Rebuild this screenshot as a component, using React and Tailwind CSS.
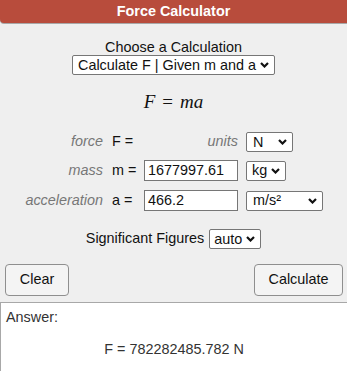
const Chevron = () => (
    <svg width="9" height="6" viewBox="0 0 9 6" className="shrink-0">
        <path d="M1 1 L4.5 4.5 L8 1" fill="none" stroke="#111" strokeWidth="2.2"/>
    </svg>
);

function Select({value, className}) {
    return (
        <div className={"h-[20px] bg-white border border-[#767676] rounded-[2px] flex items-center justify-between whitespace-nowrap pr-[5px] text-[#111] " + className}>
            <span className="leading-none">{value}</span>
            <Chevron/>
        </div>
    );
}

function Row({label, eq, children, className}) {
    return (
        <div className={"flex items-center " + className}>
            <div className="w-[103px] text-right italic text-[#777]">{label}</div>
            <div className="w-[41px] pl-[9px] text-[#111]">{eq}</div>
            {children}
        </div>
    );
}

export default function App() {
    return (
        <div className="w-[347px] h-[371px] overflow-hidden bg-[#efefef] text-[14.4px] font-['Liberation_Sans',Arial,sans-serif] text-[#111]">
            <div className="h-[23px] bg-[#b84c3c] rounded-bl-[4px] text-white font-bold flex items-center justify-center shadow-[0_1px_0_#a8a8a8]">
                Force Calculator
            </div>

            <div className="mt-[16px] text-center leading-[16px]">Choose a Calculation</div>
            <div className="flex justify-center">
                <Select value="Calculate F | Given m and a" className="w-[203px] pl-[5px]"/>
            </div>

            <div className="mt-[15px] h-[24px] flex items-center justify-center font-['Liberation_Serif',serif] text-[19px] text-[#111]">
                <span className="italic">F</span>
                <span className="mx-[7px]">=</span>
                <span className="italic">ma</span>
            </div>

            <Row label="force" eq="F =" className="mt-[18px] h-[20px]">
                <div className="w-[102px] flex items-center">
                    <span className="w-[94px] text-right italic text-[#777]">units</span>
                </div>
                <Select value="N" className="w-[47px] pl-[6px]"/>
            </Row>

            <Row label="mass" eq="m =" className="mt-[8px] h-[21px]">
                <div className="w-[102px]">
                    <div className="w-[94px] h-[21px] bg-white border border-[#767676] flex items-center pl-[3px]">1677997.61</div>
                </div>
                <Select value="kg" className="w-[40px] pl-[5px]"/>
            </Row>

            <Row label="acceleration" eq="a =" className="mt-[9px] h-[21px]">
                <div className="w-[102px]">
                    <div className="w-[94px] h-[21px] bg-white border border-[#767676] flex items-center pl-[3px]">466.2</div>
                </div>
                <Select value="m/s²" className="w-[77px] pl-[6px]"/>
            </Row>

            <div className="mt-[17px] flex items-center justify-center">
                <span className="mr-[5px]">Significant Figures</span>
                <Select value="auto" className="w-[52px] pl-[4px]"/>
            </div>

            <div className="mt-[14px] flex justify-between px-[5px]">
                <button className="w-[64px] h-[32px] border border-[#8f8f8f] rounded-[4px] bg-[#f4f4f4] text-[#111]">Clear</button>
                <button className="w-[89px] h-[32px] mr-[-1px] border border-[#8f8f8f] rounded-[4px] bg-[#f4f4f4] text-[#111]">Calculate</button>
            </div>

            <div className="mt-[6px] h-[80px] bg-white border-t border-l border-[#a8a8a8] pl-[5px] pt-[4px] text-[#333]">
                <div>Answer:</div>
                <div className="mt-[11px] text-center pr-[5px]">F = 782282485.782 N</div>
            </div>
        </div>
    );
}
